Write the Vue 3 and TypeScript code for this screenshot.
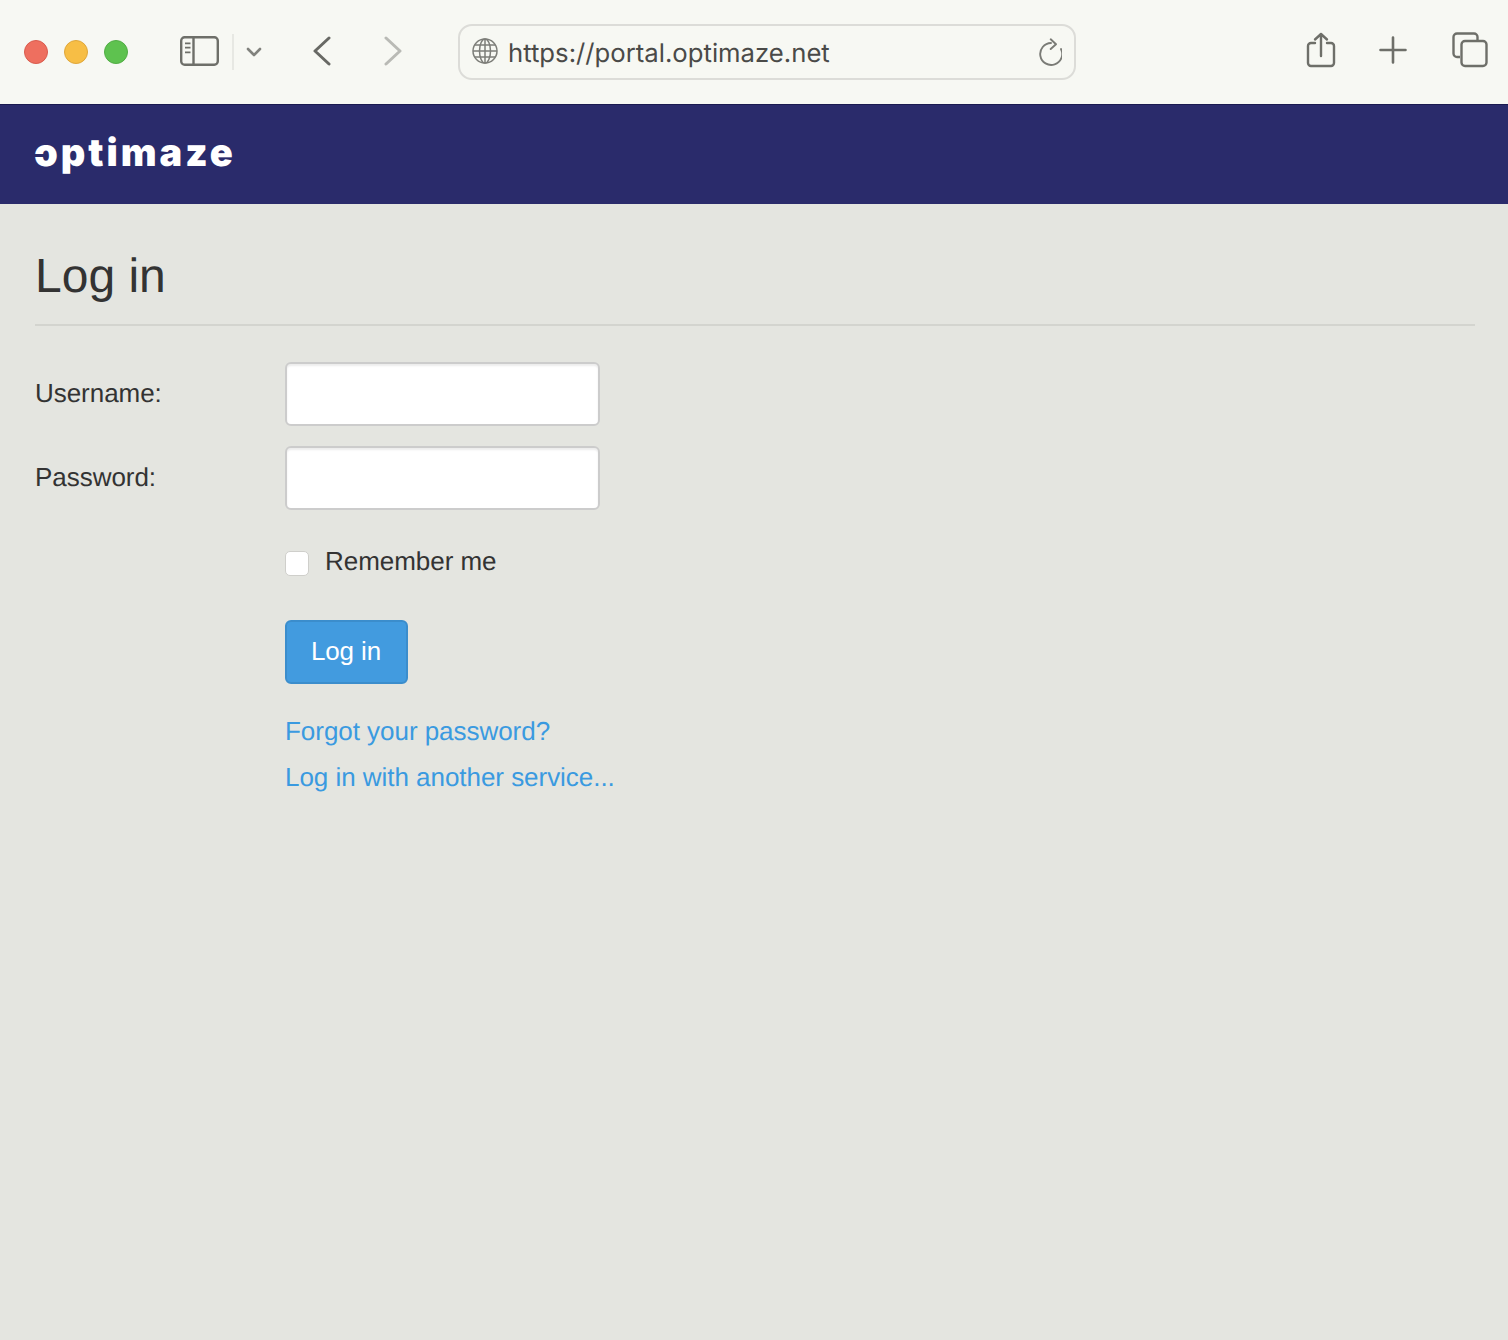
<script setup lang="ts">
const title = 'Log in'
</script>

<template>
  <div class="page">
    <header class="toolbar">
      <div class="lights">
        <span class="light red"></span>
        <span class="light yellow"></span>
        <span class="light green"></span>
      </div>
      <svg class="sidebar-icon" width="39" height="30" viewBox="0 0 39 30" fill="none" stroke="#6e6f69" stroke-width="2.4">
        <rect x="1.2" y="1.2" width="36.600" height="27.600" rx="3.5" />
        <path d="M13.5 1.2v27.600" />
        <path d="M5 7.300h5.500M5 11.700h5.500M5 16.300h5.500" stroke-width="1.800" />
      </svg>
      <span class="divider"></span>
      <svg class="chev" width="16" height="10" viewBox="0 0 16 10" fill="none" stroke="#81827d" stroke-width="2.6" stroke-linecap="round" stroke-linejoin="round">
        <path d="M2 2l6 6 6-6" />
      </svg>
      <svg class="back" width="20" height="30" viewBox="0 0 20 30" fill="none" stroke="#686964" stroke-width="3" stroke-linecap="round" stroke-linejoin="round">
        <path d="M17 2L3 15l14 13" />
      </svg>
      <svg class="forward" width="20" height="30" viewBox="0 0 20 30" fill="none" stroke="#b9bab5" stroke-width="3" stroke-linecap="round" stroke-linejoin="round">
        <path d="M3 2l14 13L3 28" />
      </svg>
      <div class="address">
        <svg class="globe" width="26" height="26" viewBox="0 0 26 26" fill="none" stroke="#7d7e79" stroke-width="1.5">
          <circle cx="13" cy="13" r="12" />
          <ellipse cx="13" cy="13" rx="5.5" ry="12" />
          <path d="M13 1v24M1 13h24M3 7h20M3 19h20" />
        </svg>
        <span class="url">https://portal.optimaze.net</span>
        <svg class="reload" width="24" height="30" viewBox="0 0 24 30" fill="none" stroke="#7a7b76" stroke-width="1.9" stroke-linecap="round" stroke-linejoin="round">
          <path d="M13 5A11 11 0 1 0 23 11" />
          <path d="M12.7 1.3L18 6.3L12.7 11" />
        </svg>
      </div>
      <div class="actions">
        <svg width="30" height="36" viewBox="0 0 30 36" fill="none" stroke="#6e6f69" stroke-width="2.4" stroke-linecap="round" stroke-linejoin="round">
          <path d="M9 11H5a3 3 0 0 0-3 3v17a3 3 0 0 0 3 3h20a3 3 0 0 0 3-3V14a3 3 0 0 0-3-3h-4" />
          <path d="M15 24V2M9 7.5L15 2l6 5.5" />
        </svg>
        <svg class="plus" width="28" height="28" viewBox="0 0 28 28" fill="none" stroke="#6e6f69" stroke-width="2.6" stroke-linecap="round">
          <path d="M14 1.5v25M1.5 14h25" />
        </svg>
        <svg class="tabs" width="36" height="36" viewBox="0 0 36 36" fill="none" stroke="#6e6f69" stroke-width="2.4" stroke-linejoin="round">
          <path d="M8 25H5a3.500 3.500 0 0 1-3.500-3.500V5A3.500 3.500 0 0 1 5 1.500h17A3.500 3.500 0 0 1 25.500 5v3" />
          <rect x="9.500" y="9" width="25" height="25" rx="3.500" />
        </svg>
      </div>
    </header>

    <div class="brand-bar">
      <span class="logo">optimaze<span class="logo-notch"></span></span>
    </div>

    <main class="content">
      <h1 class="title">{{ title }}</h1>
      <form class="form" @submit.prevent>
        <div class="row">
          <label class="label" for="username">Username:</label>
          <input id="username" class="input" type="text" />
        </div>
        <div class="row">
          <label class="label" for="password">Password:</label>
          <input id="password" class="input" type="password" />
        </div>
        <label class="remember">
          <span class="check"></span>
          <span>Remember me</span>
        </label>
        <button class="submit" type="button">Log in</button>
        <a class="link first" href="#">Forgot your password?</a>
        <a class="link" href="#">Log in with another service...</a>
      </form>
    </main>
  </div>
</template>

<style>
html, body { margin: 0; background: #e4e5e0; }
</style>

<style scoped>
.page {
  width: 1508px;
  height: 1340px;
  display: flex;
  flex-direction: column;
  background: #e4e5e0;
  font-family: "Liberation Sans", Arial, sans-serif;
  text-rendering: geometricPrecision;
  color: #333;
  overflow: hidden;
}
.toolbar {
  height: 104px;
  flex: none;
  box-sizing: border-box;
  display: flex;
  align-items: center;
  background: #f7f8f3;
  padding-left: 24px;
}
.lights { display: flex; gap: 16px; margin-right: 52px; }
.light { width: 24px; height: 24px; border-radius: 50%; box-sizing: border-box; border: 1px solid; }
.red { background: #ee6f5f; border-color: #d95c4e; }
.yellow { background: #f7be45; border-color: #dfa73b; }
.green { background: #5ec24f; border-color: #52ad45; }
.sidebar-icon { margin-right: 13px; margin-top: -2px; }
.divider { width: 2px; height: 36px; background: #e7e8e3; margin-right: 12px; }
.chev { margin-right: 50px; }
.back { margin-right: 51px; margin-top: -2px; }
.forward { margin-right: 55px; margin-top: -2px; }
.address {
  width: 618px;
  height: 56px;
  box-sizing: border-box;
  margin-top: -1px;
  border: 2px solid #dcdcd8;
  border-radius: 14px;
  display: flex;
  align-items: center;
  padding: 0 12px 0 12px;
}
.globe { margin-right: 10px; margin-top: -2px; }
.url {
  flex: 1;
  padding-top: 4px;
  font-family: Inter, "Liberation Sans", sans-serif;
  font-size: 25.7px;
  color: #4a4a48;
  white-space: nowrap;
}
.reload { margin-top: 3px; }
.actions { display: flex; align-items: center; margin-left: 230px; margin-top: -4px; }
.plus { margin-left: 43px; }
.tabs { margin-left: 45px; }
.brand-bar {
  height: 100px;
  flex: none;
  box-sizing: border-box;
  background: #2a2b6b;
  border-top: 1px solid #1a1a50;
  display: flex;
  align-items: center;
  padding: 0 34px 4px;
}
.logo {
  position: relative;
  font-family: Inter, "Liberation Sans", sans-serif;
  font-weight: 900;
  font-size: 38px;
  line-height: 1;
  letter-spacing: 3px;
  color: #fff;
}
.logo-notch {
  position: absolute;
  left: 0;
  top: 20px;
  width: 12px;
  height: 3px;
  background: #2a2b6b;
}
.content { padding: 0 33px 0 35px; }
.title {
  margin: 0;
  height: 122px;
  box-sizing: border-box;
  padding-top: 43px;
  font-size: 48px;
  line-height: 60px;
  font-weight: 400;
  color: #333;
  border-bottom: 2px solid #d3d4cf;
}
.form {
  display: flex;
  flex-direction: column;
  align-items: flex-start;
  padding-top: 36px;
  font-size: 26px;
  letter-spacing: -0.04px;
}
.row { display: flex; align-items: center; height: 64px; margin-bottom: 20px; }
.label { width: 250px; padding-bottom: 2px; }
.input {
  width: 315px;
  height: 64px;
  box-sizing: border-box;
  background: #fff;
  border: 2px solid #ccc;
  border-radius: 6px;
  box-shadow: inset 0 2px 2px rgba(0, 0, 0, 0.08);
  outline: none;
  padding: 0 12px;
}
.remember {
  display: flex;
  align-items: center;
  gap: 16px;
  margin-left: 250px;
  height: 36px;
  margin-top: 13px;
  margin-bottom: 41px;
}
.check {
  width: 24px;
  height: 25px;
  box-sizing: border-box;
  background: #fff;
  border: 1px solid #cfcfcb;
  border-radius: 5px;
  margin-top: 5px;
}
.submit {
  margin-left: 250px;
  width: 123px;
  height: 64px;
  box-sizing: border-box;
  background: #429bdf;
  border: 2px solid #3b8dcc;
  border-radius: 6px;
  color: #fff;
  font: 26px "Liberation Sans", Arial, sans-serif;
  letter-spacing: -0.1px;
  padding: 0 1px 2px 0;
}
.link {
  margin-left: 250px;
  color: #3a9ae0;
  text-decoration: none;
  line-height: 46px;
}
.link.first { margin-top: 24px; }
</style>
